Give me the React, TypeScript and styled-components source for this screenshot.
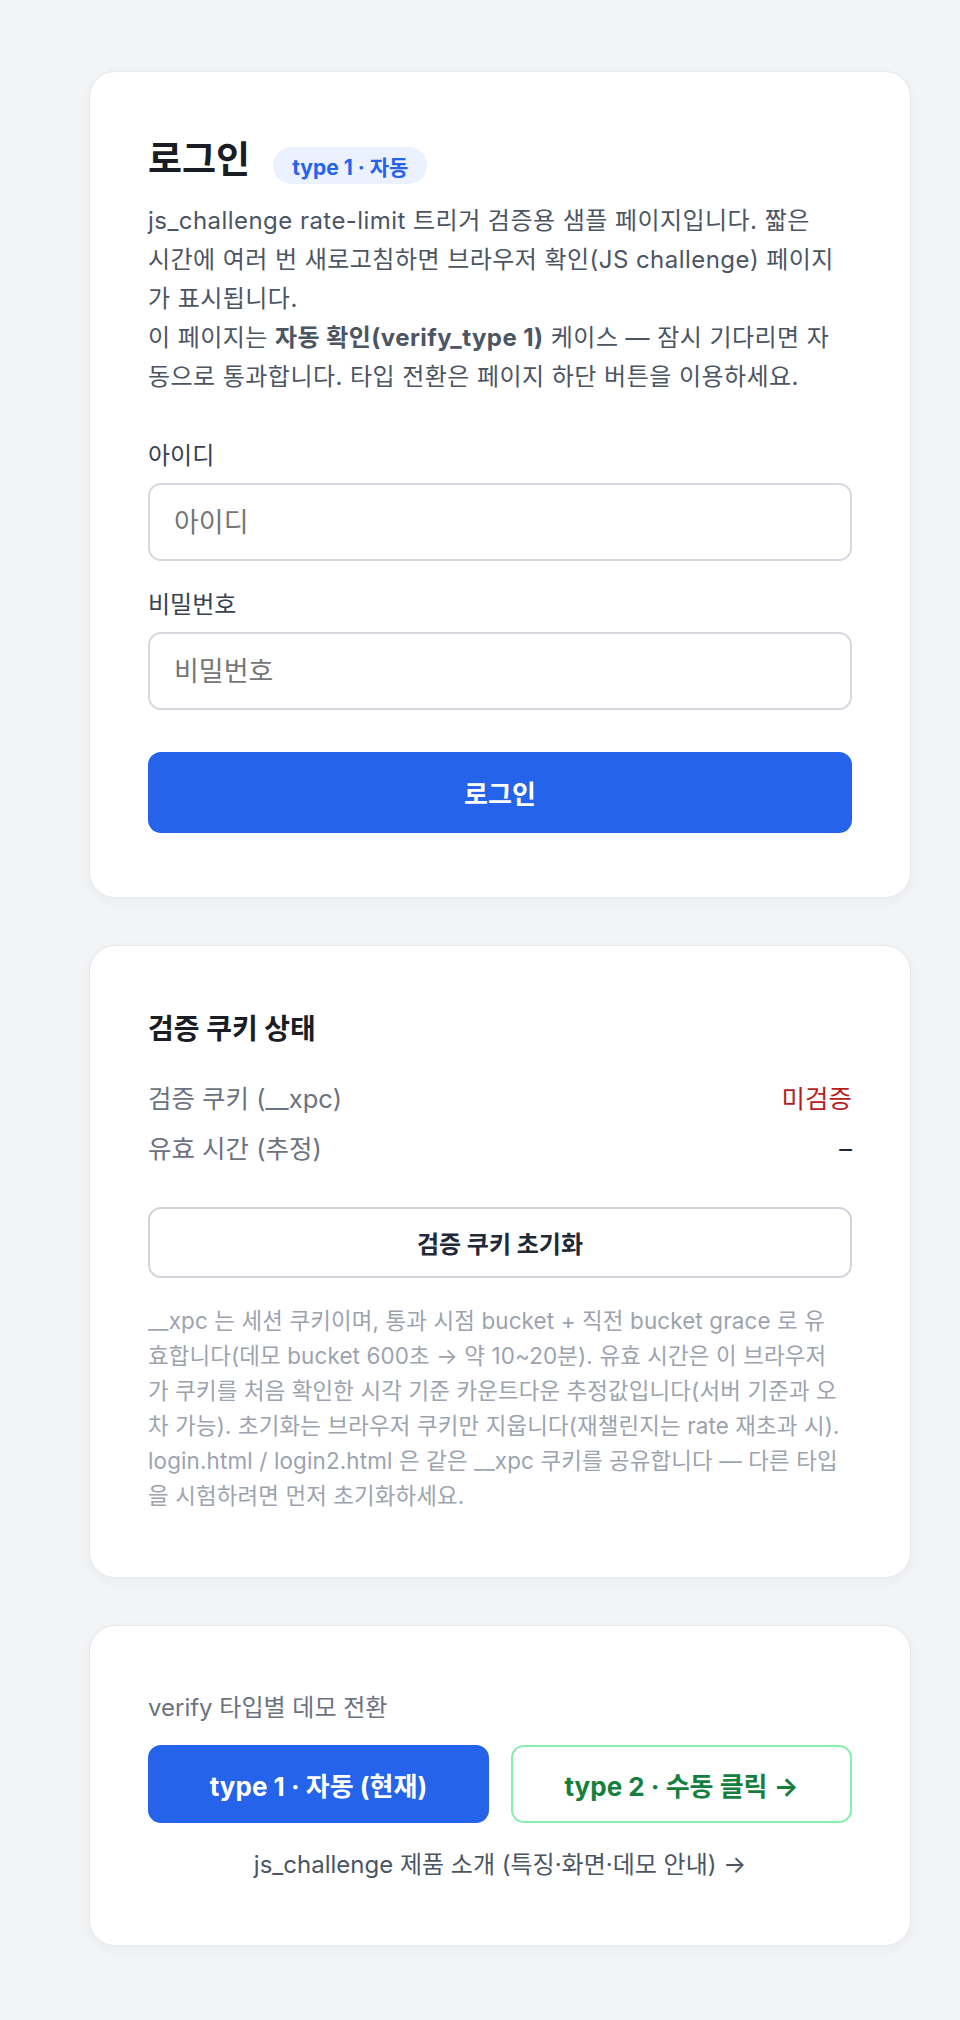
import React from "react";
import styled, { createGlobalStyle } from "styled-components";

const GlobalStyle = createGlobalStyle`
  html, body {
    margin: 0;
    padding: 0;
    background: #f3f4f6;
  }
  body {
    font-family: Inter, "Noto Sans CJK KR", "Noto Sans", sans-serif;
    color: #111827;
    -webkit-font-smoothing: antialiased;
  }
  * { box-sizing: border-box; }
`;

const Page = styled.main`
  display: flex;
  flex-direction: column;
  gap: 47px;
  padding: 71px 0 72px 89px;
`;

const Card = styled.section`
  width: 822px;
  background: #ffffff;
  border: 1px solid #e5e7eb;
  border-radius: 26px;
  box-shadow: 0 4px 14px rgba(17, 24, 39, 0.04);
  padding: 64px 58px;
  display: flex;
  flex-direction: column;
`;

const Header = styled.div`
  display: flex;
  align-items: center;
  gap: 23px;
`;

const Title = styled.h1`
  margin: 0;
  font-size: 37px;
  line-height: 46px;
  font-weight: 700;
  color: #1a1d23;
`;

const Badge = styled.span`
  display: inline-flex;
  align-items: center;
  height: 37px;
  margin-top: 11px;
  padding: 0 19px;
  border-radius: 999px;
  background: #ebf1fe;
  color: #2563eb;
  font-size: 21px;
  font-weight: 700;
`;

const Desc = styled.p`
  margin: 17px 0 0;
  font-size: 24px;
  line-height: 39px;
  letter-spacing: 0.45px;
  color: #4b5563;
  strong { font-weight: 700; color: #4b5563; }
`;

const Line = styled.span`
  display: block;
  white-space: nowrap;
`;

const Form = styled.form`
  display: flex;
  flex-direction: column;
  margin-top: 42px;
`;

const Label = styled.label`
  font-size: 24px;
  line-height: 36px;
  color: #374151;
  margin-bottom: 9px;
`;

const Input = styled.input<{ $last?: boolean }>`
  height: 78px;
  width: 100%;
  border: 2px solid #d5d8de;
  border-radius: 13px;
  padding: 0 24px;
  font-family: inherit;
  font-size: 27px;
  color: #111827;
  background: #fff;
  outline: none;
  margin-bottom: ${(p) => (p.$last ? "42px" : "26px")};
  &::placeholder { color: #767676; }
`;

const PrimaryButton = styled.button`
  height: 81px;
  width: 100%;
  border: none;
  border-radius: 13px;
  background: #2563eb;
  color: #ffffff;
  font-family: inherit;
  font-size: 26px;
  font-weight: 700;
  cursor: pointer;
`;

const SectionTitle = styled.h2`
  margin: 0;
  font-size: 28px;
  line-height: 38px;
  font-weight: 700;
  color: #1a1d23;
`;

const StatusList = styled.dl`
  margin: 31px 0 0;
  display: flex;
  flex-direction: column;
  gap: 11px;
`;

const StatusRow = styled.div`
  display: flex;
  justify-content: space-between;
  align-items: center;
  font-size: 25.5px;
  line-height: 39px;
`;

const StatusKey = styled.dt`
  color: #6b7280;
`;

const StatusValue = styled.dd<{ $tone?: "bad" | "plain" }>`
  margin: 0;
  color: ${(p) => (p.$tone === "bad" ? "#b91c1c" : "#1f2937")};
`;

const OutlineButton = styled.button`
  margin-top: 39px;
  height: 71px;
  width: 100%;
  background: #ffffff;
  border: 2px solid #d1d5db;
  border-radius: 13px;
  color: #1f2937;
  font-family: inherit;
  font-size: 24px;
  font-weight: 700;
  cursor: pointer;
`;

const Note = styled.p`
  margin: 25px 0 0;
  font-size: 22.4px;
  line-height: 35px;
  letter-spacing: 0.15px;
  color: #9ca3af;
`;

const SwitchLabel = styled.div`
  font-size: 24px;
  line-height: 36px;
  color: #6b7280;
`;

const SwitchGrid = styled.div`
  margin-top: 19px;
  display: grid;
  grid-template-columns: 1fr 1fr;
  gap: 22px;
`;

const TypeButton = styled.a<{ $active?: boolean }>`
  display: flex;
  align-items: center;
  justify-content: center;
  height: 78px;
  border-radius: 13px;
  font-size: 26px;
  font-weight: 700;
  text-decoration: none;
  background: ${(p) => (p.$active ? "#2563eb" : "#ffffff")};
  color: ${(p) => (p.$active ? "#ffffff" : "#15803d")};
  border: 2px solid ${(p) => (p.$active ? "#2563eb" : "#86efac")};
`;

const ProductLink = styled.a`
  margin-top: 26px;
  text-align: center;
  font-size: 24px;
  line-height: 32px;
  color: #4b5563;
  text-decoration: none;
`;

export default function App() {
  return (
    <>
      <GlobalStyle />
      <Page>
        <Card>
          <Header>
            <Title>로그인</Title>
            <Badge>type 1 · 자동</Badge>
          </Header>
          <Desc>
            <Line>js_challenge rate-limit 트리거 검증용 샘플 페이지입니다. 짧은</Line>
            <Line>시간에 여러 번 새로고침하면 브라우저 확인(JS challenge) 페이지</Line>
            <Line>가 표시됩니다.</Line>
            <Line>
              이 페이지는 <strong>자동 확인(verify_type 1)</strong> 케이스 — 잠시 기다리면 자
            </Line>
            <Line>동으로 통과합니다. 타입 전환은 페이지 하단 버튼을 이용하세요.</Line>
          </Desc>
          <Form onSubmit={(e) => e.preventDefault()}>
            <Label htmlFor="uid">아이디</Label>
            <Input id="uid" placeholder="아이디" />
            <Label htmlFor="pw">비밀번호</Label>
            <Input id="pw" type="password" placeholder="비밀번호" $last />
            <PrimaryButton type="submit">로그인</PrimaryButton>
          </Form>
        </Card>

        <Card>
          <SectionTitle>검증 쿠키 상태</SectionTitle>
          <StatusList>
            <StatusRow>
              <StatusKey>검증 쿠키 (__xpc)</StatusKey>
              <StatusValue $tone="bad">미검증</StatusValue>
            </StatusRow>
            <StatusRow>
              <StatusKey>유효 시간 (추정)</StatusKey>
              <StatusValue>–</StatusValue>
            </StatusRow>
          </StatusList>
          <OutlineButton type="button">검증 쿠키 초기화</OutlineButton>
          <Note>
            <Line>__xpc 는 세션 쿠키이며, 통과 시점 bucket + 직전 bucket grace 로 유</Line>
            <Line>효합니다(데모 bucket 600초 → 약 10~20분). 유효 시간은 이 브라우저</Line>
            <Line>가 쿠키를 처음 확인한 시각 기준 카운트다운 추정값입니다(서버 기준과 오</Line>
            <Line>차 가능). 초기화는 브라우저 쿠키만 지웁니다(재챌린지는 rate 재초과 시).</Line>
            <Line>login.html / login2.html 은 같은 __xpc 쿠키를 공유합니다 — 다른 타입</Line>
            <Line>을 시험하려면 먼저 초기화하세요.</Line>
          </Note>
        </Card>

        <Card>
          <SwitchLabel>verify 타입별 데모 전환</SwitchLabel>
          <SwitchGrid>
            <TypeButton $active href="#">type 1 · 자동 (현재)</TypeButton>
            <TypeButton href="#">type 2 · 수동 클릭 →</TypeButton>
          </SwitchGrid>
          <ProductLink href="#">js_challenge 제품 소개 (특징·화면·데모 안내) →</ProductLink>
        </Card>
      </Page>
    </>
  );
}
